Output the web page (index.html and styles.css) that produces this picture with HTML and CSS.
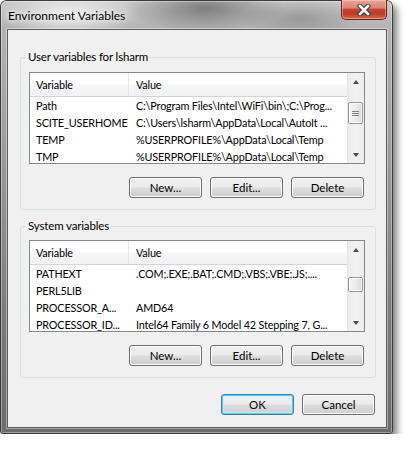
FILE: index.html
```html
<!DOCTYPE html>
<html lang="en">

<head>
    <meta charset="UTF-8">
    <title>Environment Variables</title>
    <link rel="stylesheet" href="styles.css">
</head>

<body>
    <div class="window">
        <div class="titlebar">
            <span class="title">Environment Variables</span>
            <button class="close" title="Close">
                <svg width="14" height="12" viewBox="0 0 14 12">
                    <path d="M3 2 L11 10 M11 2 L3 10" stroke="#3d3d3d" stroke-width="4.6" stroke-linecap="square" fill="none" />
                    <path d="M3 2 L11 10 M11 2 L3 10" stroke="#fff" stroke-width="2.6" stroke-linecap="square" fill="none" />
                </svg>
            </button>
        </div>

        <div class="client">
            <fieldset class="group">
                <legend>User variables for lsharm</legend>
                <div class="list">
                    <div class="list-body">
                        <div class="row head"><span class="c1">Variable</span><span class="c2">Value</span></div>
                        <div class="row"><span class="c1">Path</span><span class="c2">C:\Program Files\Intel\WiFi\bin\;C:\Prog...</span></div>
                        <div class="row"><span class="c1">SCITE_USERHOME</span><span class="c2">C:\Users\lsharm\AppData\Local\AutoIt ...</span></div>
                        <div class="row"><span class="c1">TEMP</span><span class="c2">%USERPROFILE%\AppData\Local\Temp</span></div>
                        <div class="row"><span class="c1">TMP</span><span class="c2">%USERPROFILE%\AppData\Local\Temp</span></div>
                    </div>
                    <div class="scrollbar">
                        <div class="arrow up"></div>
                        <div class="track">
                            <div class="thumb thumb-user"><span class="grip"></span></div>
                        </div>
                        <div class="arrow down"></div>
                    </div>
                </div>
                <div class="buttons">
                    <button>New...</button>
                    <button>Edit...</button>
                    <button>Delete</button>
                </div>
            </fieldset>

            <fieldset class="group group-system">
                <legend>System variables</legend>
                <div class="list">
                    <div class="list-body">
                        <div class="row head"><span class="c1">Variable</span><span class="c2">Value</span></div>
                        <div class="row"><span class="c1">PATHEXT</span><span class="c2">.COM;.EXE;.BAT;.CMD;.VBS;.VBE;.JS;....</span></div>
                        <div class="row"><span class="c1">PERL5LIB</span><span class="c2"></span></div>
                        <div class="row"><span class="c1">PROCESSOR_A...</span><span class="c2">AMD64</span></div>
                        <div class="row"><span class="c1">PROCESSOR_ID...</span><span class="c2">Intel64 Family 6 Model 42 Stepping 7, G...</span></div>
                    </div>
                    <div class="scrollbar">
                        <div class="arrow up"></div>
                        <div class="track">
                            <div class="thumb thumb-system"></div>
                        </div>
                        <div class="arrow down"></div>
                    </div>
                </div>
                <div class="buttons">
                    <button>New...</button>
                    <button>Edit...</button>
                    <button>Delete</button>
                </div>
            </fieldset>

            <div class="buttons dialog-buttons">
                <button class="default">OK</button>
                <button>Cancel</button>
            </div>
        </div>
    </div>
</body>

</html>
```

FILE: styles.css
```css
* {
    box-sizing: border-box;
}

body {
    margin: 0;
    background: #fff;
    font-family: Lato, "Noto Sans", sans-serif;
    font-size: 10.8px;
    letter-spacing: -0.15px;
    color: #000;
}

.window {
    width: 393px;
    height: 434px;
    display: flex;
    flex-direction: column;
    border-radius: 6px 6px 3px 3px;
    background:
        radial-gradient(ellipse 70px 26px at 70px 14px, rgba(255, 255, 255, 0.75), transparent),
        radial-gradient(ellipse 80px 24px at 205px 8px, rgba(70, 70, 70, 0.55), transparent),
        radial-gradient(ellipse 60px 20px at 300px 18px, rgba(90, 90, 90, 0.35), transparent),
        linear-gradient(to bottom, #c9c9c9 0, #b2b2b2 30px, #9a9a9a 160px, #7a7a7a 320px, #6c6c6c 100%);
    box-shadow: inset 0 0 0 1px #3b3b3b, inset 0 0 0 2px rgba(255, 255, 255, 0.35), 4px 5px 7px rgba(0, 0, 0, 0.5);
}

/* title bar */

.titlebar {
    height: 29px;
    display: flex;
    align-items: flex-start;
    padding-left: 8px;
    padding-right: 6px;
}

.title {
    font-size: 12px;
    letter-spacing: 0;
    line-height: 14px;
    margin-top: 9px;
    text-shadow: 0 0 4px #fff, 0 0 8px rgba(255, 255, 255, 0.8);
}

.close {
    margin-left: auto;
    width: 46px;
    height: 20px;
    padding: 0;
    display: flex;
    align-items: center;
    justify-content: center;
    border: 1px solid #6a2417;
    border-top: none;
    border-radius: 0 0 5px 5px;
    background: linear-gradient(to bottom, #e7a596 0, #d98571 42%, #c4432b 50%, #bb3b25 72%, #d96a50 100%);
    box-shadow: inset 0 0 0 1px rgba(255, 220, 210, 0.45);
}

/* client area */

.client {
    flex: 1;
    margin: 0 6px 6px 7px;
    border: 1px solid #5c5c5c;
    background: #f0f0f0;
    box-shadow: 0 0 0 1px rgba(255, 255, 255, 0.4);
    display: flex;
    flex-direction: column;
}

.group {
    margin: 20px 10px 0 12px;
    padding: 0 10px 11px 8px;
    border: 1px solid #d5dfe5;
    border-radius: 3px;
    min-width: 0;
}

.group-system {
    margin-top: 9px;
}

.group legend {
    line-height: 14px;
    padding: 0 2px;
    margin-left: -3px;
    font-size: 11.5px;
}

.list {
    margin-top: 8px;
    height: 92px;
    display: flex;
    border: 1px solid #828790;
    background: #fff;
    overflow: hidden;
}

.group-system .list {
    margin-top: 7px;
}

.list-body {
    flex: 1;
    min-width: 0;
}

.row {
    display: flex;
    height: 17px;
    line-height: 17px;
    white-space: nowrap;
}

.row.head {
    height: 24px;
    line-height: 23px;
    border-bottom: 1px solid #d5d5d5;
    background: linear-gradient(to bottom, #fff 0, #fff 45%, #f5f6f7 55%, #f2f3f5 100%);
}

.c1 {
    width: 99px;
    flex: none;
    padding-left: 6px;
    overflow: hidden;
}

.c2 {
    flex: 1;
    padding-left: 7px;
    overflow: hidden;
}

.head .c1 {
    border-right: 1px solid #e3e6ea;
}

/* scrollbar */

.scrollbar {
    width: 17px;
    flex: none;
    display: flex;
    flex-direction: column;
    background: linear-gradient(to right, #e3e3e3 0, #eeeeee 2px, #f1f1f1 50%, #eeeeee 100%);
}

.arrow {
    height: 17px;
    display: flex;
    align-items: center;
    justify-content: center;
}

.arrow::before {
    content: "";
    border-left: 3.5px solid transparent;
    border-right: 3.5px solid transparent;
}

.arrow.up::before {
    border-bottom: 4px solid #4d4d4d;
}

.arrow.down::before {
    border-top: 4px solid #4d4d4d;
}

.track {
    flex: 1;
    padding: 0 1px;
}

.thumb {
    border: 1px solid #979797;
    border-radius: 2px;
    background: linear-gradient(to right, #f5f5f5 0, #ececec 50%, #d9d9d9 100%);
    box-shadow: inset 0 0 0 1px rgba(255, 255, 255, 0.8);
    display: flex;
    align-items: center;
    justify-content: center;
}

.thumb-user {
    margin-top: 12px;
    height: 22px;
}

.thumb-system {
    margin-top: 19px;
    height: 15px;
}

.grip {
    width: 7px;
    height: 5px;
    background: repeating-linear-gradient(to bottom, #7c8189 0, #7c8189 1px, transparent 1px, transparent 2px);
}

/* buttons */

.buttons {
    display: flex;
    justify-content: flex-end;
    gap: 8px;
    margin-top: 13px;
    padding-right: 1px;
}

button {
    width: 73px;
    height: 21px;
    padding: 0;
    font-family: Lato, "Noto Sans", sans-serif;
    font-size: 11.5px;
    color: #000;
    border: 1px solid #707070;
    border-radius: 3px;
    background: linear-gradient(to bottom, #f2f2f2 0, #ebebeb 48%, #dddddd 52%, #cfcfcf 100%);
    box-shadow: inset 0 0 0 1px #fbfbfb;
}

button.default {
    border-color: #3c7fb1;
    box-shadow: inset 0 0 0 1px #48d2fb, inset 0 0 0 2px rgba(200, 240, 255, 0.6);
}

.dialog-buttons {
    margin: auto 11px 12px 0;
    padding: 0;
}
```
